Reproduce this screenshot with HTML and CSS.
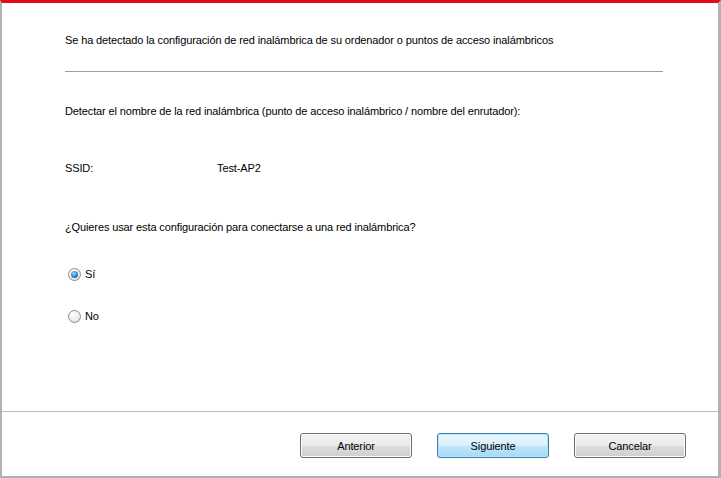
FILE: index.html
```html
<!DOCTYPE html>
<html>
<head>
<meta charset="utf-8">
<link rel="stylesheet" href="styles.css">
</head>
<body>
<div class="window">
  <div class="content">
    <p class="line intro">Se ha detectado la configuración de red inalámbrica de su ordenador o puntos de acceso inalámbricos</p>
    <div class="rule"></div>
    <p class="line detect">Detectar el nombre de la red inalámbrica (punto de acceso inalámbrico / nombre del enrutador):</p>
    <div class="line ssid"><span class="ssid-label">SSID:</span><span>Test-AP2</span></div>
    <p class="line question">¿Quieres usar esta configuración para conectarse a una red inalámbrica?</p>
    <label class="line radio first"><span class="dot checked"></span>Sí</label>
    <label class="line radio"><span class="dot"></span>No</label>
  </div>
  <div class="footer">
    <button class="btn">Anterior</button>
    <button class="btn primary">Siguiente</button>
    <button class="btn">Cancelar</button>
  </div>
</div>
</body>
</html>
```
FILE: styles.css
```css
html, body {
  margin: 0;
  padding: 0;
  background: #ffffff;
}
body {
  font-family: "Liberation Sans", Arial, sans-serif;
  font-size: 11px;
  letter-spacing: -0.12px;
  color: #000;
}
.window {
  width: 721px;
  height: 478px;
  box-sizing: border-box;
  border-top: 3px solid #e20a1c;
  border-left: 2px solid #b1b1b1;
  border-right: 3px solid #b1b1b1;
  border-bottom: 2px solid #b1b1b1;
  display: flex;
  flex-direction: column;
}
.content {
  height: 408px;
  box-sizing: border-box;
  padding: 30px 0 0 63px;
}
.line {
  margin: 0;
  height: 14px;
  line-height: 14px;
  white-space: nowrap;
}
.rule {
  width: 598px;
  height: 1px;
  background: #a0a0a0;
  margin-top: 24px;
}
.detect { margin-top: 32px; }
.ssid { margin-top: 43px; display: flex; }
.ssid-label { width: 152px; }
.question { margin-top: 45px; }
.radio {
  display: flex;
  align-items: center;
  margin-top: 32px;
  margin-left: 3px;
}
.radio.first { margin-top: 33px; }
.radio + .radio { margin-top: 28px; }
.dot {
  width: 11px;
  height: 11px;
  border-radius: 50%;
  border: 1px solid #8c8c8c;
  background: radial-gradient(circle at 40% 35%, #ffffff 0%, #ececec 60%, #d0d0d0 100%);
  margin-right: 4px;
  box-sizing: content-box;
  position: relative;
}
.dot.checked::after {
  content: "";
  position: absolute;
  left: 2px;
  top: 2px;
  width: 7px;
  height: 7px;
  border-radius: 50%;
  background: radial-gradient(circle at 40% 35%, #9fe0ff 0%, #2a8ad0 50%, #0b4f8c 100%);
}
.footer {
  flex: 1;
  border-top: 1px solid #bcbcbc;
  display: flex;
  justify-content: flex-end;
  align-items: flex-start;
  padding: 21px 32px 0 0;
  gap: 25px;
}
.btn {
  width: 112px;
  height: 25px;
  font-family: inherit;
  font-size: 11px;
  letter-spacing: inherit;
  color: #000;
  border: 1px solid #707070;
  border-radius: 3px;
  background: linear-gradient(to bottom, #f2f2f2 0%, #ebebeb 50%, #dddddd 51%, #cfcfcf 100%);
  box-shadow: inset 0 0 0 1px #fbfbfb;
  padding: 0;
}
.btn.primary {
  border-color: #3c7fb1;
  background: linear-gradient(to bottom, #eaf6fd 0%, #d9f0fc 50%, #bee6fd 51%, #a7d9f5 100%);
  box-shadow: inset 0 0 0 1px #b8e3f9;
}
```
